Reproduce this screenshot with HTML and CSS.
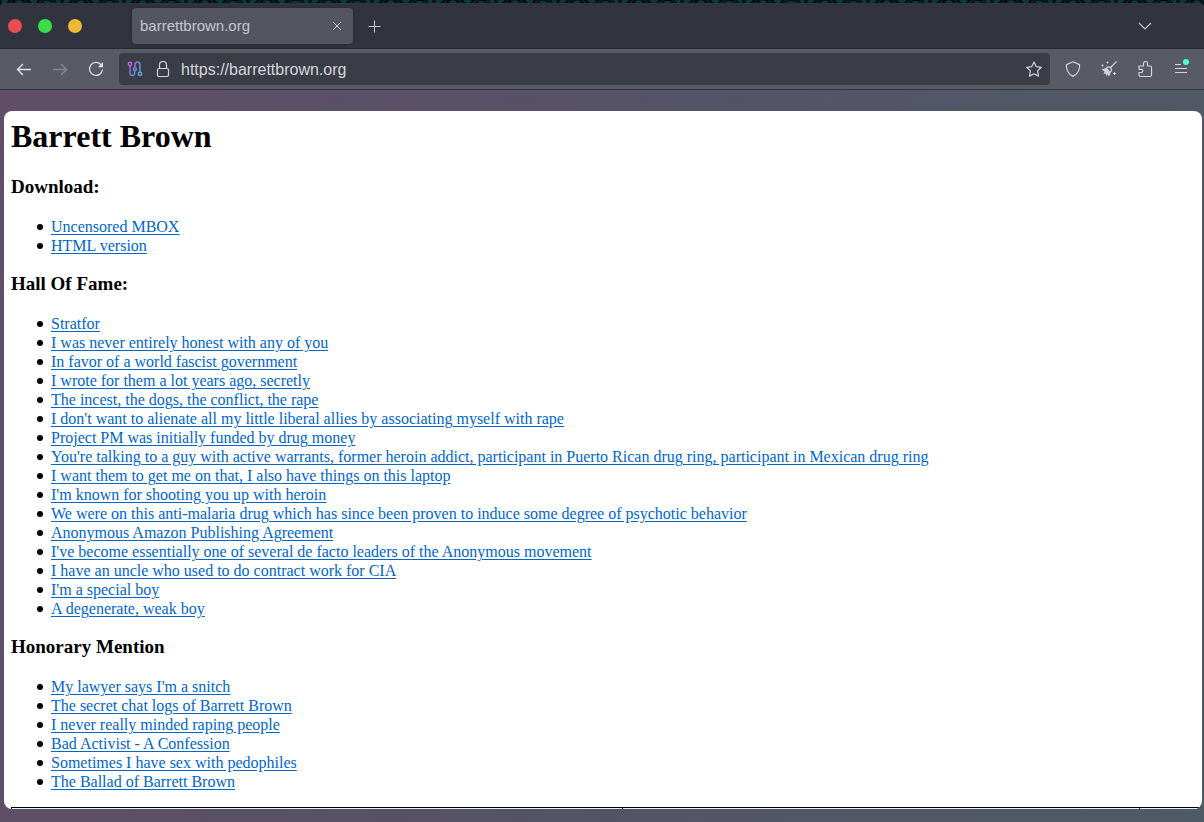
FILE: index.html
```html
<!DOCTYPE html>
<html lang="en">
<head>
<meta charset="utf-8">
<title>barrettbrown.org</title>
<link rel="stylesheet" href="styles.css">
</head>
<body>
<svg class="wallpaper" aria-hidden="true">
  <defs>
    <pattern id="scales" width="62" height="4" patternUnits="userSpaceOnUse">
      <path d="M2 0h7l-3 3h-5zM14 2l5-2 4 2-3 2zM29 0h9l-2 3h-4zM43 1h6l3 2h-7zM55 0h5l1 3h-4z" fill="#06393f" stroke="none"/>
      <path d="M10 3l3-3M24 0l4 3M39 3l4-3M52 0l3 3" stroke="#0b2a30" fill="none"/>
    </pattern>
  </defs>
  <rect width="100%" height="4" fill="url(#scales)" stroke="none"/>
</svg>
<div class="window">
  <header class="tabbar">
    <div class="lights">
      <button class="light close" aria-label="Close window"></button>
      <button class="light grow" aria-label="Maximize window"></button>
      <button class="light shrink" aria-label="Minimize window"></button>
    </div>
    <div class="tab">
      <span>barrettbrown.org</span>
      <button class="icon" aria-label="Close tab"><svg width="16" height="16" viewBox="0 0 16 16"><path d="M4 4l8 8M12 4l-8 8" stroke-width="1"/></svg></button>
    </div>
    <button class="icon" aria-label="New tab"><svg width="16" height="16" viewBox="0 0 16 16"><path d="M7.500 2.500v12M1.500 8.500h12" stroke-width="1"/></svg></button>
    <button class="icon all-tabs" aria-label="List all tabs"><svg width="16" height="16" viewBox="0 0 16 16"><path d="M2 5l6 6 6-6"/></svg></button>
  </header>
  <nav class="toolbar">
    <div class="group">
      <button class="icon bright" aria-label="Back"><svg width="16" height="16" viewBox="0 0 16 16"><path d="M15 8.500H2M7 3L1.500 8.500 7 14" stroke-width="1.400"/></svg></button>
      <button class="icon faded" aria-label="Forward" disabled><svg width="16" height="16" viewBox="0 0 16 16"><path d="M1 8.500h13M9 3l5.500 5.500L9 14" stroke-width="1.400"/></svg></button>
      <button class="icon bright" aria-label="Reload"><svg width="16" height="16" viewBox="0 0 16 16"><path d="M12.800 3.500A6.500 6.500 0 1 0 14.500 8.500"/><path d="M15 1v5.200H9.800z" fill="currentColor" stroke="none"/></svg></button>
    </div>
    <div class="address">
      <button class="icon" aria-label="Tor circuit"><svg width="16" height="16" viewBox="0 0 16 16"><defs><linearGradient id="circuit" gradientUnits="userSpaceOnUse" x1="0" y1="2" x2="16" y2="14"><stop offset="0" stop-color="#d45cf0"/><stop offset=".5" stop-color="#7a84e8"/><stop offset="1" stop-color="#3fc4f4"/></linearGradient></defs><g stroke="url(#circuit)" stroke-width="1.400"><circle cx="3" cy="3" r="1.700"/><path d="M3 4.700v7.600a2.300 2.300 0 0 0 4.600 0V9.600M8 6.600V3.500a2.400 2.400 0 0 1 4.900 0v7.700"/><circle cx="7.900" cy="8.100" r="1.500"/><circle cx="13" cy="12.800" r="1.700"/></g></svg></button>
      <button class="icon" aria-label="Connection secure"><svg width="16" height="16" viewBox="0 0 16 16"><rect x="2.500" y="7.500" width="11" height="8" rx="1.500"/><path d="M4.500 7.500V4a3.500 3.500 0 0 1 7 0v3.500"/></svg></button>
      <input class="url" type="text" aria-label="Address" value="https://barrettbrown.org">
      <button class="icon" aria-label="Bookmark this page"><svg width="16" height="16" viewBox="0 0 16 16"><path d="M8 1l2.200 4.600 5.200.7-3.800 3.600.9 5.200L8 12.700l-4.500 2.400.9-5.200L.6 6.300l5.200-.7z" stroke-linejoin="round"/></svg></button>
    </div>
    <div class="group">
      <button class="icon" aria-label="Security level"><svg width="16" height="16" viewBox="0 0 16 16"><path d="M8 .8l6.500 2.800c.4 4.800-1.500 9.300-6.500 11.800C3 12.900 1.100 8.400 1.500 3.600z" stroke-linejoin="round"/></svg></button>
      <button class="icon" aria-label="New identity"><svg width="16" height="16" viewBox="0 0 16 16"><path d="M15.500.5L9 7M5.500 7c2-2 5-1 5 1.500 0 1-.5 2-1.500 3z"/><path d="M.5 8.500l4.500-1.500 4.500 5.500L8 15.500 6.500 13l-.5 2.500-1.500-3-2 .5 1-2.500z" fill="currentColor" stroke="none"/><path d="M6.500.5v2M5.500 1.500h2M1.500 3.500v2M.5 4.500h2M13.500 11v3M12 12.500h3" stroke-width="1"/></svg></button>
      <button class="icon" aria-label="Extensions"><svg width="16" height="16" viewBox="0 0 16 16"><path d="M6.500 5V2.500a2 2 0 0 1 4 0V5H13a1.500 1.500 0 0 1 1.500 1.500V14a1.500 1.500 0 0 1-1.500 1.500H3.500A1.500 1.500 0 0 1 2 14v-2.500h2.200a1.500 1.500 0 0 0 0-3.200H2V5z" stroke-linejoin="round"/></svg></button>
      <button class="icon menu" aria-label="Open application menu"><svg width="16" height="16" viewBox="0 0 16 16"><path d="M2 3.500h6M2 7.500h12M2 11.500h12"/></svg></button>
    </div>
  </nav>
  <div class="viewport">
    <main class="page">
      <h1>Barrett Brown</h1>
      <h3>Download:</h3>
      <ul>
        <li><a href="#">Uncensored MBOX</a></li>
        <li><a href="#">HTML version</a></li>
      </ul>
      <h3>Hall Of Fame:</h3>
      <ul>
        <li><a href="#">Stratfor</a></li>
        <li><a href="#">I was never entirely honest with any of you</a></li>
        <li><a href="#">In favor of a world fascist government</a></li>
        <li><a href="#">I wrote for them a lot years ago, secretly</a></li>
        <li><a href="#">The incest, the dogs, the conflict, the rape</a></li>
        <li><a href="#">I don't want to alienate all my little liberal allies by associating myself with rape</a></li>
        <li><a href="#">Project PM was initially funded by drug money</a></li>
        <li><a href="#">You're talking to a guy with active warrants, former heroin addict, participant in Puerto Rican drug ring, participant in Mexican drug ring</a></li>
        <li><a href="#">I want them to get me on that, I also have things on this laptop</a></li>
        <li><a href="#">I'm known for shooting you up with heroin</a></li>
        <li><a href="#">We were on this anti-malaria drug which has since been proven to induce some degree of psychotic behavior</a></li>
        <li><a href="#">Anonymous Amazon Publishing Agreement</a></li>
        <li><a href="#">I've become essentially one of several de facto leaders of the Anonymous movement</a></li>
        <li><a href="#">I have an uncle who used to do contract work for CIA</a></li>
        <li><a href="#">I'm a special boy</a></li>
        <li><a href="#">A degenerate, weak boy</a></li>
      </ul>
      <h3>Honorary Mention</h3>
      <ul>
        <li><a href="#">My lawyer says I'm a snitch</a></li>
        <li><a href="#">The secret chat logs of Barrett Brown</a></li>
        <li><a href="#">I never really minded raping people</a></li>
        <li><a href="#">Bad Activist - A Confession</a></li>
        <li><a href="#">Sometimes I have sex with pedophiles</a></li>
        <li><a href="#">The Ballad of Barrett Brown</a></li>
      </ul>
      <table class="log">
        <colgroup><col class="wide"><col class="mid"><col></colgroup>
        <tbody><tr><td></td><td></td><td></td></tr></tbody>
      </table>
    </main>
  </div>
</div>
</body>
</html>
```
FILE: styles.css
```css
* { box-sizing: border-box; }

body {
  margin: 0;
  height: 100vh;
  display: flex;
  flex-direction: column;
  overflow: hidden;
  background: #020b0e;
  font-family: "Liberation Sans", Arial, sans-serif;
}

.wallpaper {
  display: block;
  width: 100%;
  height: 3px;
  flex: none;
}

.window {
  flex: 1;
  min-height: 0;
  display: flex;
  flex-direction: column;
  border-radius: 4px 4px 0 0;
  overflow: hidden;
  background: #31343f;
}

button {
  padding: 0;
  border: 0;
  background: none;
  color: inherit;
}

svg {
  display: block;
  fill: none;
  stroke: currentColor;
  stroke-width: 1.2;
}

.icon {
  display: grid;
  place-items: center;
  width: 16px;
  height: 16px;
  flex: none;
}

.bright { color: #e0e2ea; }
.faded { color: #868995; }

.tabbar {
  display: flex;
  align-items: center;
  height: 46px;
  flex: none;
  padding: 0 51px 0 8px;
  border-bottom: 1px solid #262934;
  color: #c3c7d1;
}

.lights {
  display: flex;
  gap: 16px;
  margin-right: 50px;
}

.light {
  width: 14px;
  height: 14px;
  border-radius: 50%;
}

.close { background: #e64e53; }
.grow { background: #3ade4b; }
.shrink { background: #ecb935; }

.tab {
  display: flex;
  align-items: center;
  justify-content: space-between;
  width: 221px;
  height: 36px;
  margin-right: 14px;
  padding: 0 8px;
  border-radius: 4px;
  background: #535561;
  box-shadow: 0 0 3px #23252e;
  font-size: 15px;
}

.all-tabs { margin-left: auto; }

.toolbar {
  display: flex;
  align-items: center;
  height: 41px;
  flex: none;
  padding: 0 15px 0 16px;
  border-bottom: 1px solid #33343e;
  background: #585a66;
  color: #d0d3dc;
}

.group {
  display: flex;
  gap: 20px;
}

.address {
  display: flex;
  align-items: center;
  flex: 1;
  height: 32px;
  margin: 0 15px;
  padding: 0 8px;
  gap: 12px;
  border-radius: 4px;
  background: #3b3d46;
}

.url {
  flex: 1;
  min-width: 0;
  margin: 0 0 0 -2px;
  padding: 2px 0 0;
  border: 0;
  outline: 0;
  background: none;
  color: #d4d6dd;
  font: 16px "Liberation Sans", Arial, sans-serif;
}

.menu { position: relative; }

.menu::after {
  content: "";
  position: absolute;
  top: -2px;
  right: 0;
  width: 6px;
  height: 6px;
  border-radius: 50%;
  background: #54ffbd;
}

.viewport {
  flex: 1;
  min-height: 0;
  display: flex;
  padding: 21px 2px 13px 4px;
  background: linear-gradient(100deg, #604e66, #565267 45%, #4e5a64);
}

.page {
  flex: 1;
  min-width: 0;
  overflow: hidden;
  padding: 7px 0 0 7px;
  border-radius: 8px;
  background: #fff;
  color: #000;
  font: 16px/19px "Liberation Serif", "Times New Roman", serif;
}

h1 {
  margin: 0 0 21px;
  font-size: 32px;
  line-height: 37px;
}

h3 {
  margin: 18px 0 20px;
  font-size: 19px;
  line-height: 21px;
}

ul {
  margin: 0 0 16px;
  padding-left: 40px;
  list-style: none;
}

li::before {
  content: "";
  display: inline-block;
  width: 6px;
  height: 6px;
  margin: 0 8px 0 -14px;
  border-radius: 50%;
  background: #000;
  vertical-align: 2px;
}

a {
  color: #0066cc;
  text-underline-offset: 2px;
}

.log {
  width: 100%;
  table-layout: fixed;
  border-collapse: collapse;
}

.log td {
  height: 40px;
  border: 1px solid #000;
  background: #dff5f2;
}

.wide { width: 611px; }
.mid { width: 517px; }
```
